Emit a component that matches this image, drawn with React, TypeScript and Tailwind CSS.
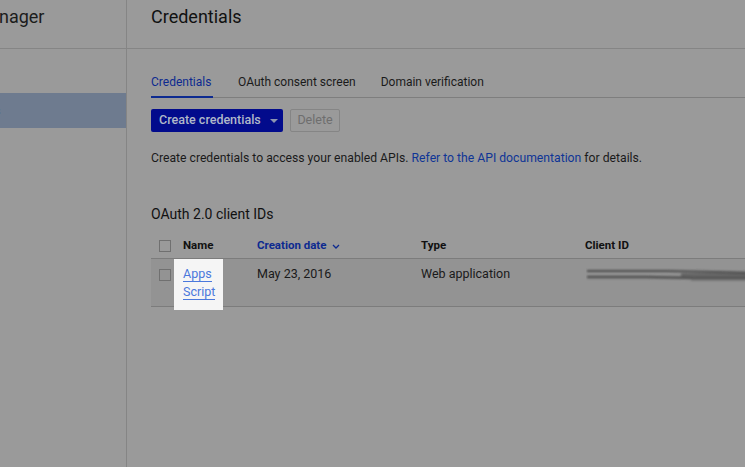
import React from "react";

export default function App() {
  return (
    <div className="w-[745px] h-[467px] bg-[#9a9a9a] flex overflow-hidden text-[#141414]" style={{ fontFamily: "Roboto, 'Noto Sans', sans-serif" }}>
      <aside className="w-[127px] shrink-0 border-r border-[#858585] flex flex-col overflow-hidden">
        <div className="h-[49px] border-b border-[#858585] flex items-start pt-[5px] whitespace-nowrap shrink-0">
          <span className="text-[18px] leading-[24px] ml-[-59px] text-[#1c1c1c]">API Manager</span>
        </div>
        <div className="h-[44px]" />
        <div className="h-[35px] bg-[#6e7b8f] flex items-center whitespace-nowrap">
          <span className="text-[13px] ml-[-65px] text-[#0b2a9a]">Credentials</span>
        </div>
      </aside>
      <main className="flex-1 flex flex-col min-w-0">
        <div className="h-[49px] border-b border-[#858585] flex items-start pt-[5px] pl-[24px] shrink-0">
          <h1 className="text-[18px] leading-[24px] text-[#111]">Credentials</h1>
        </div>
        <div className="pl-[24px] flex flex-col">
          <div className="mt-[23px] flex gap-[25px] border-b border-[#7e7e7e] h-[26px] text-[12px] pt-[1px]">
            <div className="text-[#0d2a90] border-b-2 border-[#0d2a90] h-[25px] w-[62px]">Credentials</div>
            <div className="text-[#1a1a1a]">OAuth consent screen</div>
            <div className="text-[#1a1a1a]">Domain verification</div>
          </div>
          <div className="mt-[11px] flex gap-[7px] h-[23px]">
            <div className="w-[132px] bg-[#020b8c] rounded-[2px] flex items-center pl-[8px] text-[12.5px] font-medium text-[#b0b8c9]">
              <span>Create credentials</span>
              <svg width="8" height="4" viewBox="0 0 8 4" className="ml-[9px]"><path d="M0 0h8L4 4z" fill="#8d95b0" /></svg>
            </div>
            <div className="w-[50px] border border-[#858585] rounded-[2px] flex items-center justify-center text-[12.5px] text-[#6e6e6e]">Delete</div>
          </div>
          <p className="mt-[18px] text-[12.2px] leading-[16px] text-[#1a1a1a] whitespace-nowrap">
            Create credentials to access your enabled APIs. <span className="text-[#0f3596]">Refer to the API documentation</span> for details.
          </p>
          <h2 className="mt-[38px] text-[14px] leading-[20px] text-[#111]">OAuth 2.0 client IDs</h2>
          <div className="mt-[10px] flex flex-col">
            <div className="grid grid-cols-[32px_74px_164px_164px_1fr] h-[25px] items-center border-b border-[#7c7c7c] text-[11.5px] font-bold">
              <div className="pl-[8px]"><div className="w-[12px] h-[12px] border border-[#707070]" /></div>
              <div className="text-[#111]">Name</div>
              <div className="text-[#0d2a90] flex items-center gap-[6px]">
                <span>Creation date</span>
                <svg width="8" height="5" viewBox="0 0 8 5"><path d="M1 1l3 3 3-3" stroke="#0d2a90" strokeWidth="1.3" fill="none" /></svg>
              </div>
              <div className="text-[#111]">Type</div>
              <div className="text-[#111]">Client ID</div>
            </div>
            <div className="grid grid-cols-[32px_74px_164px_164px_1fr] h-[48px] border-b border-[#7c7c7c] bg-[#939393] text-[12.5px] text-[#1a1a1a]">
              <div className="pl-[8px] pt-[10px]"><div className="w-[12px] h-[12px] border border-[#707070]" /></div>
              <div className="relative">
                <div className="absolute left-[-9px] top-0 w-[49px] h-[51px] bg-[#f5f5f5] pl-[9px] pt-[7px] leading-[17px] text-[#4a78dc] flex flex-col items-start">
                  <span className="border-b border-[#4a78dc] leading-[15px]">Apps</span>
                  <span className="border-b border-[#4a78dc] leading-[15px] mt-[2px]">Script</span>
                </div>
              </div>
              <div className="pt-[6px]">May 23, 2016</div>
              <div className="pt-[6px]">Web application</div>
              <div className="pt-[8px] relative overflow-hidden">
                <svg width="170" height="18" viewBox="0 0 170 18" className="ml-[1px]">
                  <defs>
                    <filter id="b" x="-10%" y="-100%" width="120%" height="300%">
                      <feGaussianBlur stdDeviation="1" />
                    </filter>
                  </defs>
                  <g filter="url(#b)">
                    <path d="M1 4 L80 4 L130 5 L170 6" stroke="#4a4a4a" strokeWidth="2.2" fill="none" />
                    <path d="M1 10 L60 10 L110 11 L170 11" stroke="#4e4e4e" strokeWidth="2.4" fill="none" />
                    <path d="M95 8 L170 8" stroke="#5e5e5e" strokeWidth="3" fill="none" />
                    <path d="M105 13 L170 13" stroke="#777" strokeWidth="2" fill="none" />
                  </g>
                </svg>
              </div>
            </div>
          </div>
        </div>
      </main>
    </div>
  );
}
